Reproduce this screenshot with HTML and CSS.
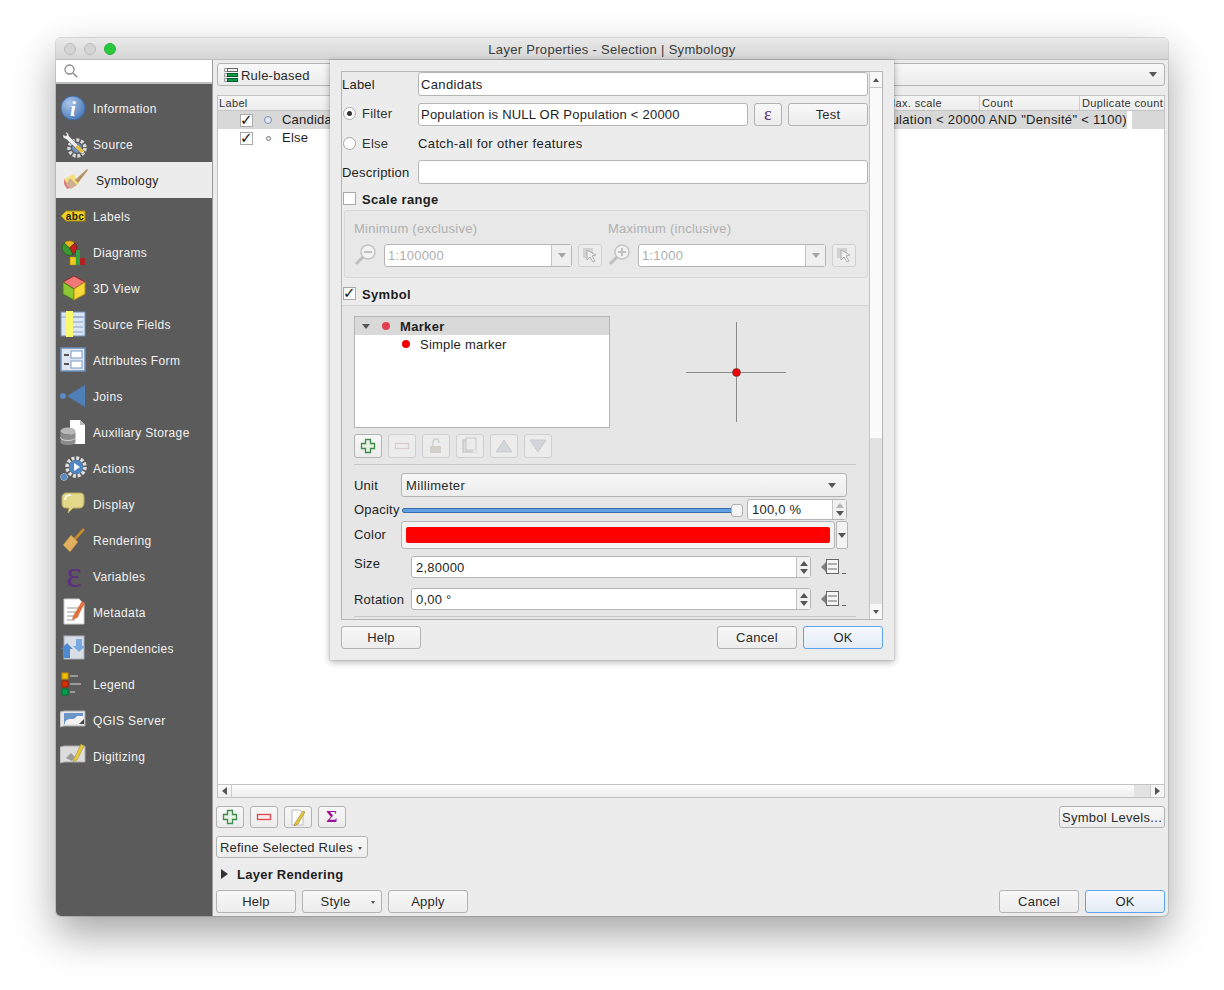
FILE: index.html
```html
<!DOCTYPE html>
<html lang="en">
<head>
<meta charset="utf-8">
<title>Layer Properties - Selection | Symbology</title>
<link rel="stylesheet" href="styles.css">
</head>
<body>
<div class="window">
  <header class="titlebar">
    <span class="light"></span><span class="light"></span><span class="light green"></span>
    <span class="title">Layer Properties - Selection | Symbology</span>
  </header>
  <div class="body">
    <nav class="sidebar">
      <div class="search"><svg width="16" height="16" viewBox="0 0 16 16"><circle cx="6.5" cy="6.5" r="4.5" fill="none" stroke="#8a8a8a" stroke-width="1.3"/><path d="M10 10l4 4" stroke="#8a8a8a" stroke-width="1.6"/></svg></div>
      <div class="nav-list">
        <div class="nav-item"><svg class="ico" viewBox="1 0 28 28"><defs><radialGradient id="gi" cx=".35" cy=".3" r=".8"><stop offset="0" stop-color="#a9c6ea"/><stop offset="1" stop-color="#4474b4"/></radialGradient></defs><circle cx="14" cy="14" r="12" fill="url(#gi)" stroke="#3f6ca8"/><text class="i-glyph" x="14" y="22" text-anchor="middle">i</text></svg>Information</div>
        <div class="nav-item"><svg class="ico" viewBox="0 0 28 28"><circle cx="17" cy="18" r="8" fill="none" stroke="#d9d9d9" stroke-width="3.5" stroke-dasharray="3 1.6"/><circle cx="17" cy="18" r="5" fill="#6d8fb8"/><path d="M4 4c-2 2-1 5 2 5l16 15 3-2L9 6C9 3 7 2 5 2l2 3-2 1z" fill="#eee" stroke="#444" stroke-width=".5"/><path d="M15 17l6 6 3-2-6-6z" fill="#e8c040"/></svg>Source</div>
        <div class="nav-item active"><svg class="ico" viewBox="-1 0 28 28"><path d="M3 13l10-5 5 10-9 4z" fill="#f2e27c"/><path d="M3 13l6 9-3 1-3-5z" fill="#e07a80"/><path d="M9 12l7 7-6 4-5-5z" fill="#cfae90"/><path d="M14 14L26 3l1 1-10 13z" fill="#b8946a"/></svg>Symbology</div>
        <div class="nav-item"><svg class="ico" viewBox="1 0 28 28"><path d="M2 14l5-5h19v10H7z" fill="#f0d020" stroke="#a08a10"/><text class="abc" x="16" y="17.500" text-anchor="middle">abc</text></svg>Labels</div>
        <div class="nav-item"><svg class="ico" viewBox="0 0 28 28"><path d="M9.500 10L4 5a7.500 7.500 0 0 1 11 0z" fill="#e8b820" stroke="#5a3a10" stroke-width=".6"/><path d="M9.500 10L15 5a7.500 7.500 0 0 1-2 11.500z" fill="#c62020" stroke="#5a1010" stroke-width=".6"/><path d="M9.500 10l3.500 6.500A7.500 7.500 0 0 1 4 5z" fill="#3a9a30" stroke="#1a5a10" stroke-width=".6"/><rect x="10" y="19" width="6" height="8" fill="#f0c820" stroke="#a08010" stroke-width=".5"/><rect x="16" y="12" width="4" height="15" fill="#30a040"/><rect x="20" y="20" width="5" height="7" fill="#b02020"/></svg>Diagrams</div>
        <div class="nav-item"><svg class="ico" viewBox="0 0 28 28"><path d="M14 2l11 6-11 7L3 8z" fill="#f07878" stroke="#a02828"/><path d="M3 8l11 7v11L3 20z" fill="#8cc832" stroke="#4a8018"/><path d="M25 8l-11 7v11l11-6z" fill="#f6d838" stroke="#a89018"/></svg>3D View</div>
        <div class="nav-item"><svg class="ico" viewBox="2 0 28 28"><rect x="3" y="2" width="24" height="24" fill="#dbe5f2" stroke="#6d90bf"/><path d="M13 7h12M13 12h12M13 17h12M13 22h12M3 7h24" stroke="#8aa6cc"/><rect x="8" y="1" width="7" height="26" fill="#f8f870"/></svg>Source Fields</div>
        <div class="nav-item"><svg class="ico" viewBox="2 0 28 28"><rect x="3" y="2" width="24" height="23" fill="#dde5f0" stroke="#6d90bf" stroke-width="1.500"/><path d="M6 9h5M6 18h5" stroke="#555" stroke-width="2"/><rect x="13" y="5" width="11" height="7" fill="#fff" stroke="#7a9cc8"/><rect x="13" y="15" width="11" height="7" fill="#fff" stroke="#7a9cc8"/></svg>Attributes Form</div>
        <div class="nav-item"><svg class="ico" viewBox="3 0 28 28"><circle cx="6" cy="14" r="3" fill="#5a8ac0"/><path d="M10 14L28 3v22z" fill="#4f7fb8"/></svg>Joins</div>
        <div class="nav-item"><svg class="ico" viewBox="2 0 28 28"><path d="M12 2h10l5 5v19H12z" fill="#fff"/><path d="M22 2v5h5z" fill="#bbb"/><ellipse cx="10" cy="13" rx="7.500" ry="3.500" fill="#b8b8b8"/><path d="M2.500 13v11c0 2 3 3 7.500 3s7.500-1 7.500-3V13c0 2-3 3.500-7.500 3.500S2.500 15 2.500 13z" fill="#8c8c8c"/><path d="M2.500 19c0 2 3 3.500 7.500 3.500s7.500-1.500 7.500-3.500" fill="none" stroke="#d5d5d5"/></svg>Auxiliary Storage</div>
        <div class="nav-item"><svg class="ico" viewBox="0 0 28 28"><circle cx="16" cy="13" r="9" fill="none" stroke="#e0e0e0" stroke-width="3.500" stroke-dasharray="3 1.700"/><circle cx="16" cy="13" r="7" fill="#4f88c6"/><path d="M14 9l6 4-6 4z" fill="#fff"/><circle cx="4" cy="23" r="3.500" fill="#5a8ac0" stroke="#ccc" stroke-dasharray="1.500 1"/></svg>Actions</div>
        <div class="nav-item"><svg class="ico" viewBox="0 0 28 28"><path d="M6 3h14c3 0 4 2 4 4v6c0 3-2 5-4 5h-7l-5 5 1-5H6c-3 0-4-2-4-5V7c0-2 2-4 4-4z" fill="#e3d789" stroke="#b8ab60"/><path d="M5 10c0-3 2-5 6-5" fill="none" stroke="#fff" stroke-width="1.500"/></svg>Display</div>
        <div class="nav-item"><svg class="ico" viewBox="0 0 28 28"><path d="M13 13L23 2l2 2-10 11z" fill="#c68a2e"/><path d="M11 9l7 7-8 10-7-7z" fill="#e0b060" stroke="#a87a30" stroke-width=".5"/></svg>Rendering</div>
        <div class="nav-item"><span class="ico eps-ico">ε</span>Variables</div>
        <div class="nav-item"><svg class="ico" viewBox="0 0 28 28"><path d="M4 1h15l5 5v20H4z" fill="#fff" stroke="#ccc"/><path d="M7 10h12M7 14h10M7 18h12M7 22h8" stroke="#999"/><path d="M13 18L22 3l3 2-8 15-5 2z" fill="#e0703a"/></svg>Metadata</div>
        <div class="nav-item"><svg class="ico" viewBox="1 0 28 28"><rect x="5" y="2" width="20" height="23" fill="#d8dde6" stroke="#a8b0bc"/><path d="M2 15l6-6 6 6h-3v9H5v-9z" fill="#4f8ad0"/><path d="M26 12l-6 6-6-6h3V5h6v7z" fill="#78a8e0"/></svg>Dependencies</div>
        <div class="nav-item"><svg class="ico" viewBox="2 0 28 28"><rect x="4" y="3" width="6" height="6" fill="#f0c000" stroke="#c89000"/><rect x="4" y="11" width="6" height="6" fill="#d83000" stroke="#a02000"/><rect x="4" y="19" width="6" height="6" fill="#00a050" stroke="#007030"/><path d="M12 6h8M12 14h11M12 22h5" stroke="#9a9a9a" stroke-width="2"/></svg>Legend</div>
        <div class="nav-item"><svg class="ico" viewBox="1 0 28 28"><path d="M1 6l4-1h21v15H5l-4 1z" fill="#e8e8e8" stroke="#aaa"/><rect x="5" y="7" width="19" height="11" fill="#6d96c8"/><path d="M6 16c4-6 8 0 12-6l6 0v8H6z" fill="#f4f4f4"/><path d="M20 18l5-5v5z" fill="#444"/></svg>QGIS Server</div>
        <div class="nav-item"><svg class="ico" viewBox="1 0 28 28"><path d="M1 5l4-1h21v16H5l-4 1z" fill="#dcdcdc" stroke="#aaa"/><path d="M7 16l5-5 4 4-3 4z" fill="#9a9a9a"/><path d="M15 17L22 2l3 2-7 14-4 2z" fill="#e8c840" stroke="#a08820" stroke-width=".5"/></svg>Digitizing</div>
      </div>
    </nav>
    <main class="panel">
      <div class="btn combo-type"><svg class="rule-ico" width="16" height="16" viewBox="0 0 16 16"><path d="M1.500 1.500h3v3h-3zM1.500 6.500h3v3h-3zM1.500 11.500h3v3h-3z" fill="none" stroke="#999"/><rect x="4.500" y="1.500" width="10" height="3" fill="#eee" stroke="#666"/><rect x="4.500" y="6.500" width="10" height="3" fill="#0b9b4a" stroke="#0a5a30"/><rect x="4.500" y="11.500" width="10" height="3" fill="#0b9b4a" stroke="#0a5a30"/></svg><span>Rule-based</span><i class="caret"></i></div>
      <section class="tree">
        <div class="tree-head"><span class="col-a">Label</span><span class="col-b">Max. scale</span><span class="col-c">Count</span><span class="col-d">Duplicate count</span></div>
        <div class="tree-row selected">
          <span class="check on small-check">✓</span><i class="dot big"></i><span class="rule-name">Candidats</span>
          <span class="rule-filter">Population &lt; 20000 AND "Densité" &lt; 1100)</span>
          <i class="row-end"></i>
        </div>
        <div class="tree-row">
          <span class="check on small-check">✓</span><i class="dot"></i><span class="rule-name">Else</span>
        </div>
        <div class="hscroll"><b class="arrow-left"></b><span class="hs-track"></span><span class="hs-thumb"></span><b class="arrow-right"></b></div>
      </section>
      <div class="tools">
        <div class="tool-group">
          <div class="btn tool"><svg width="16" height="16" viewBox="0 0 16 16"><path d="M5.500 1.500h5v4h4v5h-4v4h-5v-4h-4v-5h4z" fill="#e7f1e4" stroke="#3f8a4d" stroke-width="1.300"/></svg></div>
          <div class="btn tool"><svg width="16" height="16" viewBox="0 0 16 16"><rect x="1.500" y="5.500" width="13" height="5" fill="#fbe9e9" stroke="#e0474c" stroke-width="1.300"/></svg></div>
          <div class="btn tool"><svg width="18" height="18" viewBox="0 0 18 18"><path d="M3 2h8l3 3v12H3z" fill="#fff" stroke="#bbb"/><path d="M6 15L14 3l2 1-7 12-4 2z" fill="#e6c640" stroke="#96801c" stroke-width=".6"/></svg></div>
          <div class="btn tool sigma">Σ</div>
        </div>
        <div class="btn levels">Symbol Levels...</div>
      </div>
      <div class="btn refine">Refine Selected Rules<i class="mini-caret"></i></div>
      <div class="layer-rendering"><i class="tri-right"></i>Layer Rendering</div>
      <footer class="footer">
        <div class="btn-row">
          <div class="btn action">Help</div>
          <div class="btn action style-btn">Style<i class="mini-caret"></i></div>
          <div class="btn action">Apply</div>
        </div>
        <div class="btn-row">
          <div class="btn action">Cancel</div>
          <div class="btn action default">OK</div>
        </div>
      </footer>
    </main>
  </div>
</div>

<div class="dialog">
  <div class="frame">
    <div class="content">
      <div class="row r-label"><span class="lab-76 low">Label</span><div class="input w-450 nudge">Candidats</div></div>
      <div class="row r-filter">
        <span class="lab-76 radio-lab lift-1"><i class="radio on"></i>Filter</span>
        <div class="input w-330">Population is NULL OR Population &lt; 20000</div>
        <div class="btn eps">ε</div>
        <div class="btn action test">Test</div>
      </div>
      <div class="row r-else"><span class="lab-76 radio-lab"><i class="radio"></i>Else</span><span class="catch">Catch-all for other features</span></div>
      <div class="row r-desc"><span class="lab-76 low">Description</span><div class="input w-450"></div></div>
      <div class="row r-check scale-check"><span class="check"></span><strong>Scale range</strong></div>
      <fieldset class="scale-box">
        <div class="scale-col">
          <span class="dis">Minimum (exclusive)</span>
          <div class="scale-row">
            <svg width="24" height="24" viewBox="0 0 24 24"><circle cx="14" cy="9" r="7" fill="#f2f2f2" stroke="#c4c4c4" stroke-width="1.500"/><path d="M10 9h8" stroke="#c0c0c0" stroke-width="2"/><path d="M9 14l-7 7" stroke="#bfbfbf" stroke-width="3"/></svg>
            <div class="dis-combo"><span>1:100000</span><b><i class="caret light-caret"></i></b></div>
            <div class="pick"><svg width="18" height="18" viewBox="0 0 18 18"><rect x="2" y="2" width="10" height="10" fill="#d2d2d2"/><path d="M6 4l9 5-4 1 3 5-2 1-3-5-3 3z" fill="#eee" stroke="#b0b0b0"/></svg></div>
          </div>
        </div>
        <div class="scale-col">
          <span class="dis">Maximum (inclusive)</span>
          <div class="scale-row">
            <svg width="24" height="24" viewBox="0 0 24 24"><circle cx="14" cy="9" r="7" fill="#f2f2f2" stroke="#c4c4c4" stroke-width="1.500"/><path d="M10 9h8M14 5v8" stroke="#c0c0c0" stroke-width="2"/><path d="M9 14l-7 7" stroke="#bfbfbf" stroke-width="3"/></svg>
            <div class="dis-combo"><span>1:1000</span><b><i class="caret light-caret"></i></b></div>
            <div class="pick"><svg width="18" height="18" viewBox="0 0 18 18"><rect x="2" y="2" width="10" height="10" fill="#d2d2d2"/><path d="M6 4l9 5-4 1 3 5-2 1-3-5-3 3z" fill="#eee" stroke="#b0b0b0"/></svg></div>
          </div>
        </div>
      </fieldset>
      <div class="row r-check symbol-check"><span class="check on">✓</span><strong>Symbol</strong></div>
      <section class="symbol-box">
        <div class="symbol-inner">
          <div class="sym-top">
            <div class="sym-tree">
              <div class="sym-row marker"><i class="tri-down"></i><i class="red-dot soft"></i><strong>Marker</strong></div>
              <div class="sym-row simple"><i class="red-dot"></i>Simple marker</div>
            </div>
            <svg class="cross" width="100" height="100" viewBox="0 0 100 100"><path d="M0 50.500h100M50.500 0v100" stroke="#8a8a8a"/><circle cx="50.500" cy="50.500" r="4" fill="#f00000" stroke="#444" stroke-width=".6"/></svg>
          </div>
          <div class="sym-tools">
            <div class="btn sym-tool"><svg width="16" height="16" viewBox="0 0 16 16"><path d="M5.500 1.500h5v4h4v5h-4v4h-5v-4h-4v-5h4z" fill="#e7f1e4" stroke="#3f8a4d" stroke-width="1.300"/></svg></div>
            <div class="btn sym-tool off"><svg width="16" height="16" viewBox="0 0 16 16"><rect x="1.500" y="5.500" width="13" height="5" fill="#ececec" stroke="#d9cccc" stroke-width="1.300"/></svg></div>
            <div class="btn sym-tool off"><svg width="16" height="16" viewBox="0 0 16 16"><rect x="2" y="8" width="11" height="7" fill="#d2d0c8"/><path d="M5 8V4a3 3 0 0 1 6 0v1" fill="none" stroke="#cfcfcf" stroke-width="1.500"/></svg></div>
            <div class="btn sym-tool off"><svg width="18" height="18" viewBox="0 0 18 18"><rect x="2" y="3" width="11" height="12" fill="#dcdcdc" stroke="#bdbdbd"/><rect x="5" y="1" width="10" height="12" fill="#ececec" stroke="#c6c6c6"/><circle cx="14" cy="14" r="2.500" fill="#e2e2e2"/></svg></div>
            <div class="btn sym-tool off"><svg width="18" height="16" viewBox="0 0 18 16"><path d="M9 2l8 12H1z" fill="#d2d6da" stroke="#c8cccf"/></svg></div>
            <div class="btn sym-tool off"><svg width="18" height="16" viewBox="0 0 18 16"><path d="M9 14L1 2h16z" fill="#d2d6da" stroke="#c8cccf"/></svg></div>
          </div>
          <div class="rule"></div>
          <div class="row f-unit"><span class="f-lab w-47 low">Unit</span><div class="btn combo-unit"><span>Millimeter</span><i class="caret"></i></div></div>
          <div class="row f-opacity">
            <span class="f-lab w-48">Opacity</span>
            <div class="slider"><span class="track"></span><span class="handle"></span></div>
            <div class="spin s-opacity"><span>100,0 %</span><b class="stepper"><i class="up faint"></i><i class="down"></i></b></div>
          </div>
          <div class="row f-color">
            <span class="f-lab w-47">Color</span>
            <div class="color-btn"><span class="swatch"></span></div>
            <div class="color-menu"><i class="caret"></i></div>
          </div>
          <div class="row f-size">
            <span class="f-lab w-57 lift">Size</span>
            <div class="spin s-wide"><span class="low">2,80000</span><b class="stepper"><i class="up"></i><i class="down"></i></b></div>
            <svg class="dd" width="26" height="18" viewBox="0 0 26 18"><path d="M1 9l5-5v10z" fill="#808080"/><rect x="6.500" y="1.500" width="12" height="14" fill="#f5f5f5" stroke="#666"/><path d="M8 6h9M8 11h9" stroke="#666"/><path d="M22 15.500h4" stroke="#666"/></svg>
          </div>
          <div class="row f-rot">
            <span class="f-lab w-57 low">Rotation</span>
            <div class="spin s-wide"><span class="low">0,00 °</span><b class="stepper"><i class="up"></i><i class="down"></i></b></div>
            <svg class="dd" width="26" height="18" viewBox="0 0 26 18"><path d="M1 9l5-5v10z" fill="#808080"/><rect x="6.500" y="1.500" width="12" height="14" fill="#f5f5f5" stroke="#666"/><path d="M8 6h9M8 11h9" stroke="#666"/><path d="M22 15.500h4" stroke="#666"/></svg>
          </div>
          <div class="rule end"></div>
        </div>
      </section>
    </div>
    <aside class="vscroll"><b class="v-btn"><i class="up"></i></b><span class="v-thumb"></span><span class="v-track"></span><b class="v-btn"><i class="down"></i></b></aside>
  </div>
  <footer class="dlg-foot">
    <div class="btn action">Help</div>
    <div class="btn-row">
      <div class="btn action">Cancel</div>
      <div class="btn action default">OK</div>
    </div>
  </footer>
</div>
</body>
</html>
```

FILE: styles.css
```css
* { box-sizing: border-box; }
html, body { margin: 0; height: 990px; overflow: hidden; background: #fff; }
body { font: 13px/16px "Liberation Sans", Arial, sans-serif; color: #1e1e1e; letter-spacing: .22px; position: relative; }
strong { letter-spacing: .32px; }
.low { padding-top: 2px; }

.window { position: absolute; left: 56px; top: 38px; width: 1112px; height: 878px; border-radius: 5px; box-shadow: 0 18px 42px rgba(0,0,0,.36), 0 0 0 1px rgba(0,0,0,.12); overflow: hidden; background: #ececec; display: flex; flex-direction: column; }
.titlebar { height: 22px; flex: none; background: linear-gradient(#eaeaea, #d5d5d5); border-bottom: 1px solid #bdbdbd; display: flex; align-items: center; padding-left: 8px; gap: 8px; position: relative; }
.light { width: 12px; height: 12px; border-radius: 50%; background: #d3d3d3; border: 1px solid #bcbcbc; }
.light.green { background: #28c83f; border-color: #22b236; }
.title { position: absolute; left: 0; right: 0; top: 4px; text-align: center; font-size: 13px; letter-spacing: .3px; color: #3a3a3a; }
.body { flex: 1; display: flex; min-height: 0; }

.sidebar { width: 157px; flex: none; background: #5b5b5b; border-right: 1px solid #9a9a9a; display: flex; flex-direction: column; }
.search { height: 24px; background: #fff; border-bottom: 2px solid #bfbfbf; padding: 3px 0 0 7px; }
.nav-list { padding-top: 6px; }
.nav-item { height: 36px; display: flex; align-items: center; padding: 2px 0 0 4px; gap: 5px; color: #f2f2f2; font-size: 12px; letter-spacing: .35px; }
.nav-item.active { background: #ececec; color: #1e1e1e; gap: 8px; }
.ico { width: 28px; height: 28px; flex: none; margin-top: -2px; }
.i-glyph { font: italic bold 21px "Liberation Serif", serif; fill: #fff; }
.abc { font: bold 10px "Liberation Sans", sans-serif; fill: #222; }
.eps-ico { display: flex; justify-content: center; font: 38px/24px "Liberation Serif", serif; color: #5d2f7e; letter-spacing: 0; }

.panel { flex: 1; min-width: 0; padding: 3px 3px 0 4px; display: flex; flex-direction: column; }
.btn { border: 1px solid #b3b3b3; border-radius: 3px; background: linear-gradient(#f8f8f8, #ececec); display: flex; align-items: center; justify-content: center; color: #2a2a2a; }
.combo-type { height: 23px; justify-content: flex-start; padding: 0 7px 0 5px; gap: 2px; }
.combo-type span { flex: 1; padding-top: 2px; }
.caret { display: block; width: 0; height: 0; border: 4.500px solid transparent; border-bottom: 0; border-top: 5px solid #555; }
.light-caret { border-top-color: #a5a5a5; }
.mini-caret { display: block; width: 0; height: 0; border: 2.500px solid transparent; border-bottom: 0; border-top: 3px solid #555; }

.tree { height: 703px; margin-top: 9px; border: 1px solid #c4c4c4; background: #fff; display: flex; flex-direction: column; font-size: 13px; }
.tree-head { height: 15px; flex: none; display: flex; font-size: 11px; line-height: 15px; background: linear-gradient(#f6f6f6, #ececec); border-bottom: 1px solid #c4c4c4; color: #333; letter-spacing: .35px; }
.tree-head span { border-left: 1px solid #cfcfcf; padding-left: 2px; white-space: nowrap; overflow: hidden; }
.tree-head .col-a { width: 665px; border-left: 0; padding-left: 1px; }
.col-b { width: 96px; }
.col-c { width: 100px; }
.col-d { flex: 1; }
.tree-row { height: 18px; flex: none; display: flex; align-items: center; position: relative; padding-left: 22px; }
.tree-row.selected { background: #d8d8d8; }
.check { width: 13px; height: 13px; flex: none; border: 1px solid #a9a9a9; background: #fff; display: flex; align-items: center; justify-content: center; font: bold 15px/13px "DejaVu Sans", sans-serif; color: #111; }
.dot { width: 5px; height: 5px; margin-left: 13px; border-radius: 50%; border: 1px solid #777; background: #eee; }
.dot.big { width: 8px; height: 8px; margin-left: 11px; margin-right: -2px; border-color: #7d8ea5; background: #dde8f6; }
.tree-row .rule-name { margin-left: 11px; }
.dot.big + .rule-name { margin-left: 12px; }
.rule-filter { position: absolute; right: 37px; white-space: nowrap; letter-spacing: .32px; }
.row-end { position: absolute; right: 32px; width: 5px; top: 0; bottom: 0; background: #fff; }
.hscroll { margin-top: auto; height: 13px; flex: none; border-top: 1px solid #c4c4c4; background: linear-gradient(#fbfbfb, #eee); display: flex; align-items: center; }
.arrow-left, .arrow-right { width: 14px; height: 12px; display: flex; align-items: center; justify-content: center; flex: none; }
.arrow-left { border-right: 1px solid #ccc; }
.arrow-right { border-left: 1px solid #ccc; background: #f5f5f5; }
.arrow-left::before { content: ""; border: 4px solid transparent; border-left: 0; border-right: 5px solid #555; }
.arrow-right::before { content: ""; border: 4px solid transparent; border-right: 0; border-left: 5px solid #555; }
.hs-track { flex: 1; }
.hs-thumb { width: 16px; height: 12px; background: #e2e2e2; }

.tools { height: 22px; margin: 8px 0 0 -1px; flex: none; display: flex; justify-content: space-between; }
.tool-group { display: flex; gap: 6px; }
.tool { width: 28px; height: 22px; }
.sigma { font: bold 17px "Liberation Serif", serif; color: #9a109a; }
.levels { width: 106px; letter-spacing: .3px; padding-top: 2px; }
.refine { width: 152px; height: 22px; margin: 8px 0 0 -1px; gap: 5px; flex: none; justify-content: flex-start; padding: 2px 0 0 3px; letter-spacing: .2px; }
.layer-rendering { height: 16px; margin-top: 8px; flex: none; font-weight: bold; display: flex; align-items: center; gap: 9px; padding: 2px 0 0 4px; letter-spacing: .25px; }
.tri-right { border: 5.500px solid transparent; border-right: 0; border-left: 7px solid #333; margin-top: -2px; }
.footer { margin: 8px 0 0 -1px; display: flex; justify-content: space-between; flex: none; }
.btn-row { display: flex; gap: 6px; }
.action { width: 80px; height: 23px; }
.style-btn { position: relative; padding-right: 13px; }
.style-btn .mini-caret { position: absolute; right: 6px; top: 10px; }
.default { border-color: #5ea2ea; background: linear-gradient(#f6f9fd, #e3ebf4); }

.dialog { position: absolute; left: 330px; top: 60px; width: 564px; height: 600px; background: #ececec; box-shadow: 0 2px 7px rgba(0,0,0,.32), 0 0 0 1px rgba(0,0,0,.06); padding: 11px 11px 0; }
.frame { height: 549px; border: 1px solid #b5b5b5; display: flex; overflow: hidden; }
.content { width: 527px; flex: none; overflow: hidden; }
.row { display: flex; align-items: center; flex: none; }
.lab-76 { width: 76px; flex: none; }
.input { height: 100%; background: #fff; border: 1px solid #b5b5b5; border-radius: 3px; padding-left: 2px; white-space: nowrap; display: flex; align-items: center; }
.nudge { padding-top: 1px; letter-spacing: .35px; }
.w-450 { width: 450px; }
.w-330 { width: 330px; }
.r-label { height: 24px; }
.r-filter { height: 23px; margin-top: 7px; }
.r-else { height: 23px; margin-top: 6px; }
.r-desc { height: 24px; margin-top: 5px; }
.radio-lab { display: flex; align-items: center; gap: 6px; color: #333; }
.lift-1 { padding-bottom: 2px; }
.catch { letter-spacing: .38px; }
.radio { width: 13px; height: 13px; margin-left: 1px; flex: none; border-radius: 50%; border: 1px solid #a8a8a8; background: #fff; display: flex; align-items: center; justify-content: center; }
.radio.on::before { content: ""; width: 5px; height: 5px; border-radius: 50%; background: #333; }
.eps { width: 28px; height: 23px; margin-left: 6px; font: 18px "Liberation Serif", serif; color: #5d2f7e; }
.test { margin-left: 6px; }
.r-check { height: 13px; padding-left: 1px; gap: 6px; }
.r-check strong { padding-top: 2px; }
.scale-check { margin-top: 8px; }
.symbol-check { margin-top: 9px; }
.scale-box { margin: 5px 0 0 2px; width: 524px; height: 68px; padding: 10px 0 0 9px; border: 1px solid #d9d9d9; border-radius: 3px; background: #e8e8e8; display: flex; gap: 6px; }
.scale-col { width: 248px; display: flex; flex-direction: column; gap: 6px; }
.dis { color: #b0b0b0; line-height: 16px; letter-spacing: .25px; }
.scale-row { display: flex; align-items: center; }
.dis-combo { width: 188px; height: 23px; margin: 0 6px; border: 1px solid #b5b5b5; border-radius: 3px; background: #fff; color: #aeaeae; display: flex; align-items: center; padding-left: 3px; }
.dis-combo span { flex: 1; padding-top: 1px; }
.dis-combo b { width: 20px; height: 21px; border-left: 1px solid #c4c4c4; background: #efefef; display: flex; align-items: center; justify-content: center; }
.pick { width: 24px; height: 23px; border: 1px solid #d0d0d0; border-radius: 3px; background: #ececec; display: flex; align-items: center; justify-content: center; }
.scale-row > svg { margin-left: 0; flex: none; }

.symbol-box { margin-top: 5px; border-top: 1px solid #d6d6d6; background: #e6e6e6; padding: 10px 12px 0 12px; height: 320px; }
.symbol-inner { width: 502px; }
.sym-top { display: flex; align-items: flex-start; height: 112px; }
.sym-tree { width: 256px; height: 112px; flex: none; background: #fff; border: 1px solid #b5b5b5; }
.sym-row { height: 18px; display: flex; align-items: center; }
.sym-row strong { padding-top: 2px; }
.marker { background: #d9d9d9; padding-left: 7px; }
.tri-down { border: 4px solid transparent; border-bottom: 0; border-top: 5px solid #555; }
.red-dot { width: 8px; height: 8px; border-radius: 50%; background: #f00000; margin-right: 10px; }
.red-dot.soft { background: #e04050; margin-left: 12px; margin-right: 10px; }
.simple { padding: 2px 0 0 47px; }
.simple .red-dot { margin-top: -2px; }
.cross { margin: 6px 0 0 76px; flex: none; }
.sym-tools { display: flex; gap: 6px; margin-top: 6px; }
.sym-tool { width: 28px; height: 24px; }
.sym-tool.off { background: #ececec; border-color: #cfcfcf; }
.rule { height: 1px; background: #c8c8c8; margin-top: 6px; }
.f-unit { height: 24px; margin-top: 8px; }
.f-opacity { height: 21px; margin-top: 2px; }
.f-color { height: 28px; margin-top: 1px; }
.f-size { height: 22px; margin-top: 7px; }
.f-rot { height: 22px; margin-top: 10px; }
.f-lab { flex: none; }
.w-47 { width: 47px; }
.w-48 { width: 48px; }
.w-57 { width: 57px; }
.lift { position: relative; top: -3px; }
.combo-unit { width: 446px; height: 24px; justify-content: space-between; padding: 1px 10px 0 4px; letter-spacing: .35px; }
.slider { width: 341px; height: 12px; position: relative; flex: none; }
.track { position: absolute; left: 0; right: 6px; top: 4px; height: 5px; border-radius: 2px; background: #62a1e6; border: 1px solid #3a6ca5; }
.handle { position: absolute; right: 0; top: 0; width: 12px; height: 13px; border: 1px solid #b0b0b0; border-radius: 3px; background: #f5f5f5; }
.spin { background: #fff; border: 1px solid #b5b5b5; border-radius: 3px; display: flex; align-items: center; padding-left: 4px; height: 100%; }
.spin span { flex: 1; }
.stepper { width: 14px; height: 100%; flex: none; border-left: 1px solid #c4c4c4; background: #f1f1f1; display: flex; flex-direction: column; align-items: center; justify-content: center; gap: 3px; }
.up, .down { display: block; width: 0; height: 0; border: 4px solid transparent; }
.up { border-top: 0; border-bottom: 5px solid #555; }
.down { border-bottom: 0; border-top: 5px solid #555; }
.up.faint { border-bottom-color: #b5b5b5; }
.s-opacity { width: 100px; margin-left: 4px; }
.s-wide { width: 400px; }
.color-btn { width: 434px; height: 100%; border: 1px solid #b5b5b5; border-radius: 3px; background: #f3f3f3; padding: 5px 4px; }
.swatch { display: block; height: 16px; border-radius: 2px; background: #f00; }
.color-menu { width: 12px; height: 100%; margin-left: 1px; border: 1px solid #b5b5b5; border-radius: 2px; background: #f3f3f3; display: flex; align-items: center; justify-content: center; }
.color-menu .caret { border-width: 4px; border-top-width: 5px; border-bottom: 0; }
.dd { margin-left: 9px; flex: none; }
.rule.end { margin-top: 6px; }

.vscroll { width: 13px; flex: none; border-left: 1px solid #c4c4c4; display: flex; flex-direction: column; }
.v-btn { height: 15px; flex: none; background: #f7f7f7; display: flex; align-items: center; justify-content: center; }
.v-btn .up, .v-btn .down { border-width: 3.500px; border-top-width: 4px; }
.v-btn .up { border-top: 0; border-bottom-width: 4px; }
.v-btn .down { border-bottom: 0; }
.v-thumb { height: 351px; background: #fbfbfb; border-top: 1px solid #c8c8c8; }
.v-track { flex: 1; background: #e2e2e2; }
.dlg-foot { margin-top: 6px; display: flex; justify-content: space-between; }
```
